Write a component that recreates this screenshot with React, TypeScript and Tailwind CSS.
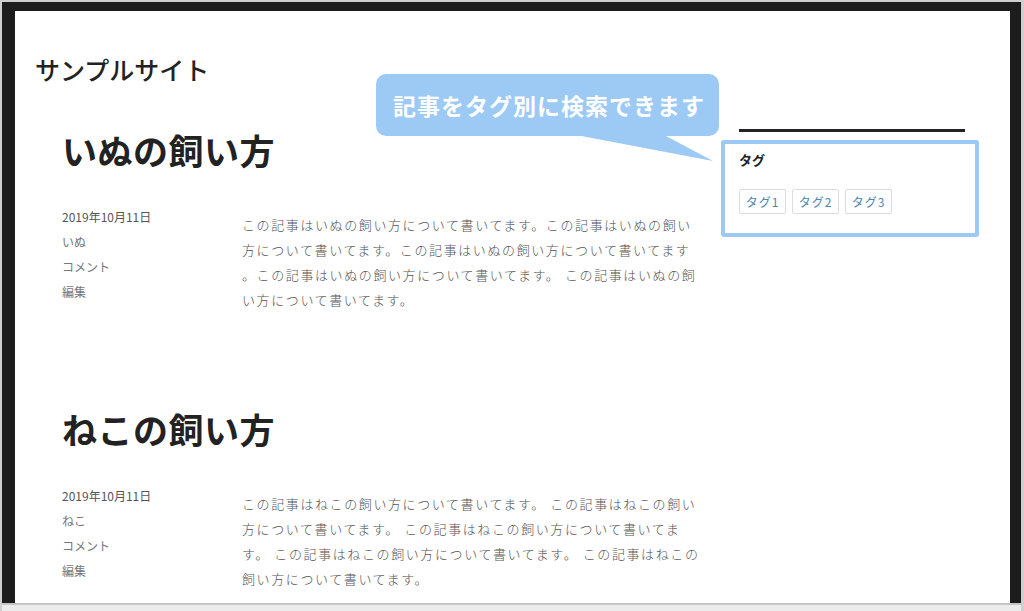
import React from "react";

const sans = { fontFamily: '"Noto Sans CJK JP", "Noto Sans", sans-serif' };

function Post({
  title,
  kind,
  lines,
}: {
  title: string;
  kind: string;
  lines: string[];
}) {
  return (
    <div className="flex flex-col">
      <h2 className="text-[35px] leading-[42px] font-bold text-[#222] tracking-[0.5px]">{title}</h2>
      <div className="flex mt-[33px]">
        <div className="w-[180px] shrink-0 flex flex-col text-[12px] leading-[25px]">
          <div className="text-[#555]">2019年10月11日</div>
          <div className="text-[#777]">{kind}</div>
          <div className="text-[#777]">コメント</div>
          <div className="text-[#777]">編集</div>
        </div>
        <div className="mt-[8px] flex flex-col text-[13px] leading-[25px] tracking-[1.6px] text-[#555] font-light">
          {lines.map((l, i) => (
            <div key={i} className="whitespace-pre">
              {l}
            </div>
          ))}
        </div>
      </div>
    </div>
  );
}

export default function App() {
  return (
    <div className="w-[1024px] h-[611px] bg-[#cfcfcf] pt-[2px] pl-[2px] pr-[3px] flex flex-col overflow-hidden" style={sans}>
      <div className="h-[601px] border-t-[9px] border-l-[13px] border-r-[11px] border-[#1c1c1c] bg-white relative flex flex-col">
        <div className="pl-[20px] pt-[40px] text-[25px] leading-[36px] text-[#222] font-medium">サンプルサイト</div>
        <div className="flex pl-[47px] mt-[42px]">
          <div className="w-[630px] shrink-0 flex flex-col gap-[96px]">
            <Post
              title="いぬの飼い方"
              kind="いぬ"
              lines={[
                "この記事はいぬの飼い方について書いてます。この記事はいぬの飼い",
                "方について書いてます。この記事はいぬの飼い方について書いてます",
                "。この記事はいぬの飼い方について書いてます。 この記事はいぬの飼",
                "い方について書いてます。",
              ]}
            />
            <Post
              title="ねこの飼い方"
              kind="ねこ"
              lines={[
                "この記事はねこの飼い方について書いてます。 この記事はねこの飼い",
                "方について書いてます。 この記事はねこの飼い方について書いてま",
                "す。 この記事はねこの飼い方について書いてます。 この記事はねこの",
                "飼い方について書いてます。",
              ]}
            />
          </div>
          <div className="ml-[29px] w-[258px] shrink-0 flex flex-col">
            <div className="ml-[18px] w-[226px] h-[3px] bg-[#222]"></div>
            <div className="mt-[8px] h-[97px] border-4 border-[#9ccaf5] rounded-[3px] px-[14px] pt-[6px]">
              <div className="text-[13px] leading-[20px] font-bold text-[#222]">タグ</div>
              <div className="flex gap-[6px] mt-[19px]">
                {["タグ1", "タグ2", "タグ3"].map((t) => (
                  <div
                    key={t}
                    className="w-[47px] h-[25px] border border-[#ddd] rounded-[2px] flex items-center justify-center text-[12px] text-[#4f86ad] tracking-[1px]"
                  >
                    {t}
                  </div>
                ))}
              </div>
            </div>
          </div>
        </div>

        {/* callout annotation */}
        <div className="absolute left-[361px] top-[63px] w-[343px] h-[62px] rounded-[10px] bg-[#9ccaf5] flex items-center pl-[17px] text-white text-[23px] font-bold tracking-[1px]">
          記事をタグ別に検索できます
        </div>
        <svg className="absolute left-[361px] top-[124px]" width="360" height="40" viewBox="0 0 360 40">
          <polygon points="200,0 288,0 337,26" fill="#9ccaf5" />
        </svg>
      </div>
      <div className="flex-1 border-t-2 border-[#c4c4c4] bg-[#ececec]"></div>
    </div>
  );
}
